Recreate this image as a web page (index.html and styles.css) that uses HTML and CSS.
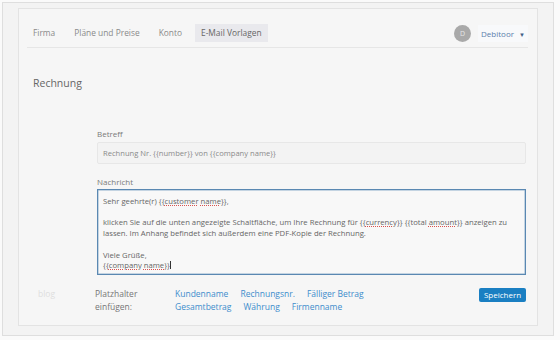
FILE: index.html
```html
<!DOCTYPE html>
<html lang="de">
<head>
<meta charset="utf-8">
<title>E-Mail Vorlagen</title>
<link rel="stylesheet" href="styles.css">
</head>
<body>
<div class="frame">
  <div class="card">
    <nav class="nav">
      <a class="tab">Firma</a>
      <a class="tab">Pläne und Preise</a>
      <a class="tab">Konto</a>
      <a class="tab active">E-Mail Vorlagen</a>
      <div class="user">
        <span class="avatar">D</span>
        <span class="account">Debitoor <span class="caret">&#9660;</span></span>
      </div>
    </nav>
    <h1 class="title">Rechnung</h1>
    <div class="form">
      <div class="label">Betreff</div>
      <div class="input">Rechnung Nr. {{number}} von {{company name}}</div>
      <div class="label label-gap">Nachricht</div>
      <div class="textarea">
        <div>Sehr geehrte(r) {{<span class="sp">customer</span> <span class="sp">name</span>}},</div>
        <div>&nbsp;</div>
        <div>klicken Sie auf die unten angezeigte Schaltfläche, um Ihre Rechnung für {{<span class="sp">currency</span>}} {{total <span class="sp">amount</span>}} anzeigen zu lassen. Im Anhang befindet sich außerdem eine PDF-Kopie der Rechnung.</div>
        <div>&nbsp;</div>
        <div>Viele Grüße,</div>
        <div>{{<span class="sp">company</span> <span class="sp">name</span>}}<span class="cursor"></span></div>
      </div>
    </div>
    <div class="footer">
      <div class="blog">blog</div>
      <div class="ph-label">Platzhalter<br>einfügen:</div>
      <div class="links">
        <a>Kundenname</a>
        <a>Rechnungsnr.</a>
        <a>Fälliger Betrag</a>
        <a>Gesamtbetrag</a>
        <a>Währung</a>
        <a>Firmenname</a>
      </div>
      <button class="save">Speichern</button>
    </div>
  </div>
</div>
</body>
</html>
```

FILE: styles.css
```css
* { box-sizing: border-box; }
html, body { margin: 0; padding: 0; }
body {
  background: #fafafa;
  font-family: "Open Sans", "Liberation Sans", sans-serif;
  width: 560px;
  height: 340px;
  overflow: hidden;
}
.frame {
  margin: 2px 0 0 2px;
  width: 552px;
  height: 334px;
  border: 1px solid #dedede;
  background: #f3f3f3;
  padding: 5px 0 0 15px;
}
.card {
  width: 520px;
  height: 318px;
  border: 1px solid #e3e3e3;
  background: #f6f6f6;
  padding: 0 9px 0 14px;
}
.nav {
  display: flex;
  align-items: center;
  gap: 7px;
  margin-left: -6px;
  padding-top: 15px;
  padding-bottom: 5px;
  border-bottom: 1px solid #e6e6e6;
}
.tab {
  font-size: 8.4px;
  line-height: 18px;
  height: 18px;
  padding: 0 6px;
  color: #8a8a8a;
}
.tab.active {
  background: #e9e9ed;
  color: #666;
}
.user {
  margin-left: auto;
  display: flex;
  align-items: center;
  gap: 7px;
}
.avatar {
  width: 17px;
  height: 17px;
  border-radius: 50%;
  background: #a9a9a9;
  color: #e6e6e6;
  font-size: 7px;
  line-height: 17px;
  text-align: center;
}
.account {
  background: #f8f9fb;
  height: 17px;
  line-height: 17px;
  padding: 0 3px;
  font-size: 8px;
  color: #5b7eab;
}
.caret {
  font-size: 6px;
  color: #3f5f86;
  margin-left: 3px;
}
.title {
  margin: 28px 0 0 0;
  font-size: 10.5px;
  line-height: 14px;
  font-weight: normal;
  color: #666;
}
.form {
  margin: 38px 2px 0 64px;
}
.label {
  font-size: 8px;
  line-height: 12px;
  color: #7a7a7a;
}
.label-gap { margin-top: 12px; }
.input {
  margin-top: 2px;
  height: 22px;
  border: 1px solid #e7e7e7;
  background: #f3f3f3;
  border-radius: 2px;
  padding: 0 5px;
  font-size: 7.6px;
  line-height: 20px;
  color: #8a8a8a;
}
.textarea {
  margin-top: 1px;
  height: 86px;
  border: 1px solid #5a88b2;
  box-shadow: inset 0 0 0 0.5px #8fb0cc;
  background: #f8f8f8;
  padding: 6px 5px;
  font-size: 7.7px;
  line-height: 10.7px;
  color: #666;
}
.sp {
  text-decoration: underline dotted #d9534f;
  text-underline-offset: 1px;
}
.cursor {
  display: inline-block;
  width: 1px;
  height: 8px;
  background: #333;
  vertical-align: -1px;
}
.footer {
  display: flex;
  align-items: flex-start;
  margin-top: 12px;
  font-size: 8.5px;
  line-height: 13px;
}
.blog {
  margin-left: 5px;
  width: 57px;
  color: #dedede;
}
.ph-label {
  width: 80px;
  color: #777;
}
.links {
  width: 200px;
  display: flex;
  flex-wrap: wrap;
  column-gap: 12px;
}
.links a { color: #3d8dcc; }
.save {
  margin: 0.5px 2px 0 auto;
  height: 14px;
  width: 47px;
  padding: 0;
  border: none;
  border-radius: 2px;
  background: #1a7fc2;
  color: #fff;
  font-family: "Open Sans", "Liberation Sans", sans-serif;
  font-size: 8px;
  line-height: 14px;
}
```
